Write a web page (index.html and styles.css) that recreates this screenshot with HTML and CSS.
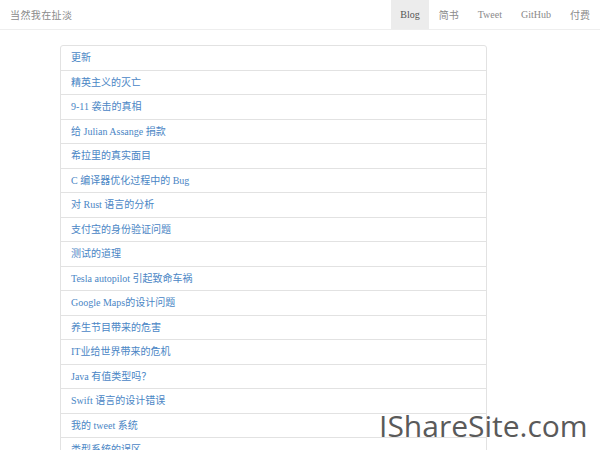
FILE: index.html
```html
<!DOCTYPE html>
<html lang="zh-CN">
<head>
<meta charset="utf-8">
<title>当然我在扯淡</title>
<link rel="stylesheet" href="styles.css">
</head>
<body>
<header class="navbar">
  <a class="brand" href="#">当然我在扯淡</a>
  <nav class="nav">
    <a class="nav-item active" href="#">Blog</a>
    <a class="nav-item" href="#">简书</a>
    <a class="nav-item" href="#">Tweet</a>
    <a class="nav-item" href="#">GitHub</a>
    <a class="nav-item" href="#">付费</a>
  </nav>
</header>
<main class="content">
  <ul class="list">
    <li class="list-item"><a href="#">更新</a></li>
    <li class="list-item"><a href="#">精英主义的灭亡</a></li>
    <li class="list-item"><a href="#">9-11 袭击的真相</a></li>
    <li class="list-item"><a href="#">给 Julian Assange 捐款</a></li>
    <li class="list-item"><a href="#">希拉里的真实面目</a></li>
    <li class="list-item"><a href="#">C 编译器优化过程中的 Bug</a></li>
    <li class="list-item"><a href="#">对 Rust 语言的分析</a></li>
    <li class="list-item"><a href="#">支付宝的身份验证问题</a></li>
    <li class="list-item"><a href="#">测试的道理</a></li>
    <li class="list-item"><a href="#">Tesla autopilot 引起致命车祸</a></li>
    <li class="list-item"><a href="#">Google Maps的设计问题</a></li>
    <li class="list-item"><a href="#">养生节目带来的危害</a></li>
    <li class="list-item"><a href="#">IT业给世界带来的危机</a></li>
    <li class="list-item"><a href="#">Java 有值类型吗？</a></li>
    <li class="list-item"><a href="#">Swift 语言的设计错误</a></li>
    <li class="list-item"><a href="#">我的 tweet 系统</a></li>
    <li class="list-item"><a href="#">类型系统的误区</a></li>
  </ul>
</main>
<div class="watermark">IShareSite.com</div>
</body>
</html>
```
FILE: styles.css
```css
html, body {
  margin: 0;
  padding: 0;
  background: #fff;
  overflow: hidden;
  height: 450px;
}
body {
  font-family: "Liberation Serif", "Noto Sans CJK SC", serif;
  font-size: 10px;
  position: relative;
}
a {
  text-decoration: none;
}
.navbar {
  display: flex;
  justify-content: space-between;
  align-items: stretch;
  height: 29px;
  border-bottom: 1px solid #eeeeee;
  background: #fff;
}
.brand {
  display: flex;
  align-items: center;
  padding-left: 10px;
  color: #8a8a8a;
  font-size: 10px;
  letter-spacing: 0.4px;
}
.nav {
  display: flex;
}
.nav-item {
  display: flex;
  align-items: center;
  padding: 0 9.5px;
  color: #8a8a8a;
  font-size: 10px;
}
.nav-item:last-child {
  padding-right: 10px;
}
.nav-item.active {
  background: #ececec;
  color: #555;
}
.content {
  padding-top: 15px;
  padding-left: 60px;
}
.list {
  list-style: none;
  margin: 0;
  padding: 0;
  width: 427px;
}
.list-item {
  border: 1px solid #e2e2e2;
  margin-bottom: -1px;
  padding: 5px 10px;
  height: 13.5px;
  line-height: 13.5px;
  overflow: hidden;
}
.list-item:first-child {
  border-top-left-radius: 3px;
  border-top-right-radius: 3px;
}
.list-item a {
  color: #4a86c5;
}
.watermark {
  position: absolute;
  left: 379px;
  top: 404px;
  font-family: "Open Sans", "Noto Sans", sans-serif;
  font-size: 30px;
  line-height: 44px;
  color: #5a5a5a;
}
```
